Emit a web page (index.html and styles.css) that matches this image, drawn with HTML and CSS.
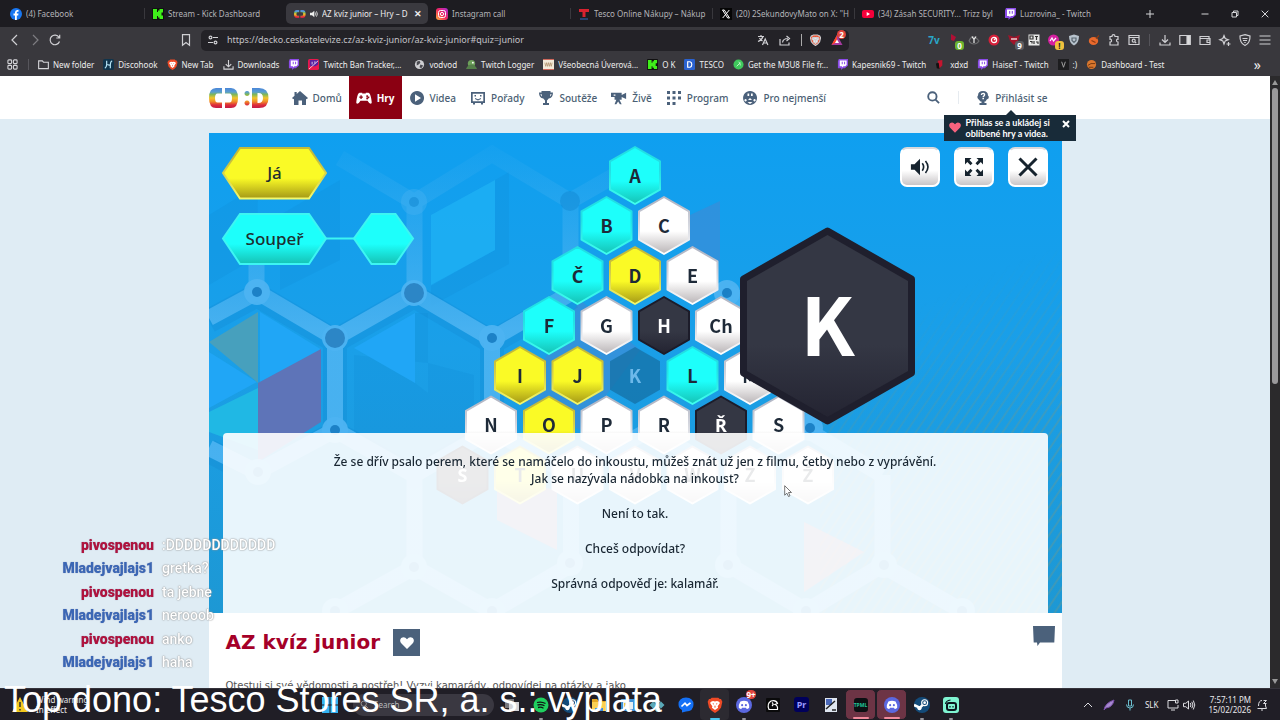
FILE: index.html
```html
<!DOCTYPE html>
<html lang="cs">
<head>
<meta charset="utf-8">
<title>AZ kvíz junior – Hry – Déčko</title>
<link rel="stylesheet" href="styles.css">
</head>
<body>
<svg class="defs" aria-hidden="true">
  <defs>
    <linearGradient id="rainbow" x1="0" y1="0" x2="0" y2="1">
      <stop offset="0" stop-color="#4a86d8"/><stop offset=".2" stop-color="#5a9fd0"/><stop offset=".32" stop-color="#7db65a"/>
      <stop offset=".5" stop-color="#f0c62c"/><stop offset=".68" stop-color="#f08a28"/><stop offset=".85" stop-color="#dd2c3c"/><stop offset="1" stop-color="#c41b46"/>
    </linearGradient>
    <linearGradient id="insta" x1="0" y1="1" x2="1" y2="0">
      <stop offset="0" stop-color="#ffb43a"/><stop offset=".5" stop-color="#f0255f"/><stop offset="1" stop-color="#a62be0"/>
    </linearGradient>
  </defs>
  <symbol id="i-twitch" viewBox="0 0 12 12"><path fill="#8b4be8" d="M2 0h10v7L8.500 10H6.500L4.500 12V10H1V2.500z"/><path fill="#fff" d="M3 1.500h7.500v5L9 8H7L5.500 9.300V8H3z"/><path stroke="#8b4be8" stroke-width="1.100" d="M5.700 3v2.700M8.300 3v2.700"/></symbol>
  <symbol id="i-kick" viewBox="0 0 12 12"><rect width="12" height="12" rx="1" fill="#111"/><path fill="#3ff01a" d="M1 1h4v3h1V2.500h1.500V1H11v3.500H9.500V7.500H11V11H7.500V9.500H6V8H5v3H1z"/></symbol>
  <symbol id="i-brave" viewBox="0 0 12 12"><path fill="#ee4a26" d="M3.500.5h5L9.500 1.500h1L11.500 3.500 10.500 8 8.500 10.300 6 12 3.500 10.300 1.500 8 .5 3.500l1-2h1z"/><path fill="#fff" d="M3 3.500l1.500-.5L6 3.400 7.500 3l1.500.5.7 1L8 7l.3 1L6 9.800 3.700 8 4 7 2.300 4.500z"/><path fill="#ee4a26" d="M4 4.500l1.300.5-.3.800zM8 4.500L6.700 5l.3.800zM6 6l.5 1.500L6 8.300 5.500 7.500z"/></symbol>
  <symbol id="i-discord" viewBox="0 0 12 12"><circle cx="6" cy="6" r="6" fill="#5b68e0"/><path fill="#fff" d="M3.300 3.300Q6 2.300 8.700 3.300 10.200 5.700 9.900 8 9 8.900 8 9L7.500 8.100h-3L4 9Q3 8.900 2.100 8 1.800 5.700 3.300 3.300z"/><circle cx="4.600" cy="6.100" r=".8" fill="#5b68e0"/><circle cx="7.400" cy="6.100" r=".8" fill="#5b68e0"/></symbol>
  <symbol id="i-steam" viewBox="0 0 14 14"><circle cx="7" cy="7" r="7" fill="#134a78"/><path d="M0 7l4.500 2M5 9.500L9 5.500" stroke="#fff" stroke-width="2.200"/><circle cx="9.300" cy="5" r="2.600" fill="#134a78" stroke="#fff"/><circle cx="9.300" cy="5" r="1.200" fill="#fff"/><circle cx="4.800" cy="9.800" r="1.800" fill="#fff"/></symbol>
  <symbol id="i-logo" viewBox="0 0 30 20"><g fill="url(#rainbow)"><path d="M13 0v5.500H8.500Q6 5.500 6 10t2.500 4.500H13V20H7Q0 20 0 10T7 0z"/><path d="M16 0v5.500h4.500Q23 5.500 23 10t-2.500 4.500H16V20h6q7 0 7-10T22 0z"/></g></symbol>
  <symbol id="i-sound" viewBox="0 0 12 12"><path fill="currentColor" d="M0 4h3l3.500-3v10L3 8H0z"/><path fill="none" stroke="currentColor" stroke-width="1.200" d="M8 3.700q1.600 2.300 0 4.600M9.700 2q2.800 4 0 8"/></symbol>
  <symbol id="i-heart" viewBox="0 0 14 12"><path fill="currentColor" d="M7 12L1 6Q-.8 3.200 1.200 1.100 4.500-1 7 2.300 9.500-1 12.800 1.100 14.800 3.200 13 6z"/></symbol>
</svg>

<header class="browser">
  <div class="tabs" role="tablist">
    <button class="tab" role="tab"><svg class="ic" viewBox="0 0 12 12"><circle cx="6" cy="6" r="6" fill="#1877f2"/><path fill="#fff" d="M5 12V7.500H3.500v-2H5V4.500Q5 2 7.200 2h1.300v1.800h-1q-.7 0-.7.800v.9h1.700l-.3 2H6.800V12z"/></svg><span>(4) Facebook</span></button>
    <button class="tab tab-line"  role="tab"><svg class="ic"><use href="#i-kick"/></svg><span>Stream - Kick Dashboard</span></button>
    <button class="tab active" role="tab" aria-selected="true"><svg class="ic"><use href="#i-logo"/></svg><svg class="ic-s"><use href="#i-sound"/></svg><span>AZ kvíz junior – Hry – D</span><b class="tab-x">✕</b></button>
    <button class="tab" role="tab"><svg class="ic" viewBox="0 0 12 12"><rect width="12" height="12" rx="3" fill="url(#insta)"/><rect x="2.500" y="2.500" width="7" height="7" rx="2" fill="none" stroke="#fff"/><circle cx="6" cy="6" r="1.600" fill="none" stroke="#fff"/></svg><span>Instagram call</span></button>
    <button class="tab tab-line" role="tab"><svg class="ic" viewBox="0 0 12 12"><path fill="#d8222f" d="M1 1h10v3H7.500v5h-3V4H1z"/><path stroke="#2f5ea8" stroke-width="1.200" d="M2 11h8"/></svg><span>Tesco Online Nákupy – Nákup</span></button>
    <button class="tab tab-line" role="tab"><svg class="ic" viewBox="0 0 12 12"><rect width="12" height="12" fill="#050505"/><path d="M2.500 2h1.800L9.500 10H7.700zM9.300 2L2.700 10" fill="none" stroke="#fff"/></svg><span>(20) 2SekundovyMato on X: "H</span></button>
    <button class="tab tab-line" role="tab"><svg class="ic" viewBox="0 0 12 12"><rect y="2" width="12" height="8" rx="2" fill="#f4003a"/><path fill="#fff" d="M4.700 4v4L8 6z"/></svg><span>(34) Zásah SECURITY... Trizz byl</span></button>
    <button class="tab" role="tab"><svg class="ic"><use href="#i-twitch"/></svg><span>Luzrovina_ - Twitch</span></button>
    <button class="new-tab" aria-label="New tab"><svg viewBox="0 0 8 8"><path d="M4 0v8M0 4h8"/></svg></button>
    <div class="win">
      <button aria-label="Minimize"><svg viewBox="0 0 8 8"><path d="M.5 4h7"/></svg></button>
      <button aria-label="Restore"><svg viewBox="0 0 8 8"><path d="M1 2.500h4.500V7H1zM2.500 2.500V1H7v4.500H5.500"/></svg></button>
      <button aria-label="Close"><svg viewBox="0 0 8 8"><path d="M.7.700l6.600 6.600M7.300.700L.7 7.300"/></svg></button>
    </div>
  </div>
  <div class="toolbar">
    <div class="nav-btns">
      <button aria-label="Back"><svg viewBox="0 0 12 12"><path d="M8 1L3 6l5 5"/></svg></button>
      <button aria-label="Forward" class="dim"><svg viewBox="0 0 12 12"><path d="M4 1l5 5-5 5"/></svg></button>
      <button aria-label="Reload"><svg viewBox="0 0 12 12"><path d="M10.500 7.500A4.800 4.800 0 1 1 10 3.300M10.700.700v3.300H7.300"/></svg></button>
    </div>
    <button class="save" aria-label="Bookmark this page"><svg viewBox="0 0 12 12"><path d="M2.500.7h7v10.600L6 8.500l-3.500 2.800z"/></svg></button>
    <div class="url">
      <svg viewBox="0 0 12 12"><circle cx="3.500" cy="3.500" r="1.400"/><circle cx="8.500" cy="8.500" r="1.400"/><path d="M6 3.500h5M1 8.500h5"/></svg>
      <input aria-label="Address" value="https://decko.ceskatelevize.cz/az-kviz-junior/az-kviz-junior#quiz=junior">
      <svg viewBox="0 0 12 12"><path d="M1 2.500h6M4 1v1.500M6 2.500Q5 6 1 7.500M2.500 4q1 2 3 3M5.500 11l2.700-6 2.700 6M6.500 9h3.500"/></svg>
      <svg viewBox="0 0 12 12"><path d="M1 5v6h9V8.500M3.500 8.500Q4 4.500 9 4.500M7.500 2l3 2.500-3 2.500"/></svg>
      <svg class="brv"><use href="#i-brave"/></svg>
      <span class="rewards"><svg viewBox="0 0 12 12"><path d="M6 1l5.500 10H.5z" fill="#a53aa0" stroke="none"/><path d="M6 1L.5 11 6 8z" fill="#ff4724" stroke="none"/><path d="M6 5.500L8 9H4z" fill="#fff" stroke="none"/></svg><i class="badge red">2</i></span>
    </div>
    <div class="exts">
      <span class="seven">7v</span>
      <span><svg viewBox="0 0 12 12"><path fill="#b01035" stroke="none" d="M3 0l5 3-2 4-3-1z"/></svg><i class="badge green">0</i></span>
      <span><svg viewBox="0 0 12 12"><path d="M1 7q2-5 5-4t5 4q-2 3-5 3T1 7" stroke="#6d6d70"/><path d="M4 2.500l2 3 2-3M6 5.500V9" stroke="#eee"/></svg></span>
      <span><svg viewBox="0 0 12 12"><circle cx="6" cy="6" r="5.500" fill="#d5203a" stroke="none"/><circle cx="6" cy="6" r="2.600" stroke="#fff"/><path d="M6 6l2-2" stroke="#fff"/></svg></span>
      <span><svg viewBox="0 0 12 12"><path fill="#a0142a" stroke="none" d="M0 1l6 2 6-2-2 6-4 4-4-4z"/><path d="M3 5h6" stroke="#fff"/></svg><i class="badge grey">9</i></span>
      <span><svg viewBox="0 0 12 12"><path fill="#e8e8e8" stroke="none" d="M.5.500h11v11H.5z"/><path stroke="#333" d="M2 2h3v3H2zM7 2.500h3M8.500 2v4M2 7.500h2v2M6 7v3M8 8h2v2"/></svg></span>
      <span><svg viewBox="0 0 12 12"><circle cx="5.500" cy="6" r="5.500" fill="#d51fa0" stroke="none"/><path d="M2 7l2-3 1.500 3L8 4" stroke="#fff"/></svg><i class="badge amber">!</i></span>
      <span><svg viewBox="0 0 12 12"><path fill="#b7c2cc" stroke="none" d="M6 .5l5 1.500q0 7-5 9.500Q1 9 1 2z"/><path stroke="#5a6670" d="M4 4h4v2.500L6 8.500 4 6.500z"/></svg></span>
      <span><svg viewBox="0 0 12 12"><ellipse cx="5.500" cy="7" rx="4.700" ry="4" fill="#e8692c" stroke="none"/><path d="M8 4.500l3-3M3.500 6.500l4 2" stroke="#8c3a12"/></svg></span>
      <span><svg viewBox="0 0 12 12"><path d="M2 2.500h2Q4 .5 5.500.7 7 .7 7 2.500h3v2.700Q8.500 5 8.500 6.500T10 8v3H2V8q1.700 0 1.500-1.500T2 5.200z"/></svg></span>
      <span><svg viewBox="0 0 12 12"><path d="M1 1.500h10v9H1zM1 3.500h10"/><circle cx="5.700" cy="6.700" r="1.500"/><path d="M7 8l1.200 1.200"/></svg></span>
    </div>
    <div class="exts right">
      <span><svg viewBox="0 0 12 12"><path d="M6 1v7M3 5.500l3 3 3-3M1 8.500V11h10V8.500"/></svg></span>
      <span><svg viewBox="0 0 12 12"><path d="M.8 1.500h10.400v9H.8z"/><path fill="#ddd" d="M8 1.500h3v9H8z"/></svg></span>
      <span><svg viewBox="0 0 12 12"><path d="M1 2.500h9v2M1 2v8.500h10v-6H1M11 6H8v2.500h3"/></svg></span>
      <span><svg viewBox="0 0 12 12"><path d="M5 1.500l1.200 3 3 1.200-3 1.200L5 10 3.800 6.900l-3-1.200 3-1.200zM9.500 8v4M7.500 10h4"/></svg></span>
      <span><svg viewBox="0 0 12 12"><path d="M6 .7l5 1.300q.3 7-5 9.500Q.7 9 1 2z"/><path d="M3.500 4.500h5M4 6.500h4M5.300 8.500h1.400"/></svg></span>
      <span><svg viewBox="0 0 12 12"><path d="M.5 2h11M.5 6h11M.5 10h11"/></svg></span>
    </div>
  </div>
  <nav class="marks" aria-label="Bookmarks">
    <a href="#" class="apps"><svg viewBox="0 0 12 12" class="ln"><rect x="1" y="1" width="4" height="4" rx="1"/><rect x="7" y="1" width="4" height="4" rx="1"/><rect x="1" y="7" width="4" height="4" rx="1"/><rect x="7" y="7" width="4" height="4" rx="1"/></svg></a>
    <a href="#"><svg viewBox="0 0 12 12" class="ln"><path d="M.7 2h4l1.300 1.500h5.300v7H.7z"/></svg>New folder</a>
    <a href="#"><svg viewBox="0 0 12 12"><rect width="12" height="12" rx="2" fill="#10344c"/><path d="M4 2v4q0 3-2 4M8 10V6q0-3 2-4M4 6l4 1" stroke="#b5e3f5" fill="none" stroke-width="1.300"/></svg>Discohook</a>
    <a href="#"><svg><use href="#i-brave"/></svg>New Tab</a>
    <a href="#"><svg viewBox="0 0 12 12" class="ln"><path d="M6 1v7M3 5.500l3 3 3-3M1 8v3h10V8"/></svg>Downloads</a>
    <a href="#" aria-label="Twitch"><svg><use href="#i-twitch"/></svg></a>
    <a href="#"><svg viewBox="0 0 12 12"><rect width="12" height="12" rx="2" fill="#e9184c"/><path fill="#5b1fa0" d="M2 1h9v5L8 8H2z"/><path d="M1 11L11 2M4.500 3v3M7.500 2.500V5" stroke="#fff" stroke-width=".8"/></svg>Twitch Ban Tracker,...</a>
    <a href="#" class="gap"><svg viewBox="0 0 12 12"><circle cx="6" cy="6" r="5" fill="#cfcfd2"/><path fill="#4a4a50" d="M3 3l3-1 1 2-2 2-2 1zM7 6l3 1-2 3-2-1z"/></svg>vodvod</a>
    <a href="#"><svg viewBox="0 0 12 12"><circle cx="6" cy="5" r="4" fill="#6da05a"/><path fill="#55804a" d="M0 11q2-5 6-5t6 5z"/><circle cx="7.500" cy="4" r="1" fill="#fff"/></svg>Twitch Logger</a>
    <a href="#"><svg viewBox="0 0 12 12"><rect width="12" height="12" fill="#f3ead9"/><path d="M0 .5h12M0 11.500h12" stroke="#c9564a"/><path d="M2 4l1 4 1-4 1 4 1-4 1 4 1-4 1 4 1-4" stroke="#a5845c" fill="none" stroke-width=".7"/></svg>Všeobecná Úverová...</a>
    <a href="#"><svg><use href="#i-kick"/></svg>O K</a>
    <a href="#"><svg viewBox="0 0 12 12"><rect width="12" height="12" rx="1.500" fill="#2a62d0"/><path d="M4 3h2.500Q8.500 3.500 8.500 6T6.500 9H4z" stroke="#fff" stroke-width="1.300" fill="none"/></svg>TESCO</a>
    <a href="#"><svg viewBox="0 0 12 12"><circle cx="6" cy="6" r="5.500" fill="#3fc95c"/><path d="M4 8l4-4M6 3q2 1 2 4" stroke="#c8f5d0" fill="none"/></svg>Get the M3U8 File fr...</a>
    <a href="#"><svg><use href="#i-twitch"/></svg>Kapesnik69 - Twitch</a>
    <a href="#"><svg viewBox="0 0 12 12"><path fill="#c4152f" d="M3 2l5-1v6l-4 4z"/><path fill="#111" d="M1 5l3-1 1 7-3-1z"/></svg>xdxd</a>
    <a href="#"><svg><use href="#i-twitch"/></svg>HaiseT - Twitch</a>
    <a href="#"><svg viewBox="0 0 12 12"><rect width="12" height="12" fill="#1d1d1f"/><path d="M4 3l2 6 2-6" stroke="#aaa" fill="none"/></svg>:)</a>
    <a href="#"><svg viewBox="0 0 12 12"><circle cx="6" cy="6" r="5" fill="#d9772e"/><path d="M2 7q3-3 8-2M3 9h5" stroke="#6d330d" fill="none"/></svg>Dashboard - Test</a>
    <button class="more" aria-label="More bookmarks">»</button>
  </nav>
</header>

<div class="view">
  <div class="page">
    <header class="site">
      <div class="wrap site-row">
        <a href="#" class="logo" aria-label="ČT :D"><svg viewBox="0 0 60 20"><use href="#i-logo" width="30" height="20"/><g fill="url(#rainbow)"><path fill-rule="evenodd" d="M38 3a2.500 2.500 0 1 0 .1 0zM38 12.500a2.500 2.500 0 1 0 .1 0zM43 0h7q9.500 0 9.500 10T50 20h-7zM48.500 5v10q5.500 .5 5.500-5T48.500 5z"/></g></svg></a>
        <nav class="menu" aria-label="Hlavní">
          <a href="#"><svg viewBox="0 0 16 16"><path d="M8 1l8 7-1.300 1.300L14 8.700V15h-4v-4.500H6.500V15H2V8.700l-.7.600L0 8l2.500-2.200V2h2.200v1.900z"/></svg>Domů</a>
          <a href="#" class="on"><svg viewBox="0 0 18 14"><path fill-rule="evenodd" d="M4 1h3v1h4V1h3q2 .5 3 6t.5 6q-2 1.500-4.500-3H5Q2.500 14.500.5 13 0 12.500 1 7t3-6zM5 4v1.300H3.700v1.400H5V8h1.400V6.700h1.300V5.300H6.400V4zm7.500 0a1 1 0 1 0 .1 0zm0 2.500a1 1 0 1 0 .1 0zM14 5.200a1 1 0 1 0 .1 0z"/></svg>Hry</a>
          <a href="#"><svg viewBox="0 0 16 16"><path fill-rule="evenodd" d="M8 1a7 7 0 1 0 .1 0zM6 4.300v7.400L12 8z"/></svg>Videa</a>
          <a href="#"><svg viewBox="0 0 16 16"><path fill-rule="evenodd" d="M1 2h14v11h-2v1.500h-2V13H5v1.500H3V13H1zM2.700 3.700v7.600h10.600V3.700z"/><path d="M4.500 5H6v1.500H4.500zM10 5h1.500v1.500H10zM5 8l3 1.300L11 8v1l-3 1.500L5 9z"/></svg>Pořady</a>
          <a href="#"><svg viewBox="0 0 16 16"><path fill-rule="evenodd" d="M3.500 1h9v1.500H15Q15 8 10.700 8.500L9 10.500V13h2v2H5v-2h2v-2.500L5.300 8.500Q1 8 1 2.500h2.500zM2.500 4q.3 2 1.500 2.500L3.500 4zm10 0L12 6.500q1.200-.5 1.500-2.500z"/></svg>Soutěže</a>
          <a href="#"><svg viewBox="0 0 18 16"><path d="M0 2h12v2.500L17 2v7l-5-2v3H9.500l2.500 5h-2L8 12l-2 3H4l2-5H4V7H0zM3 4v1.500h2V4z" fill-rule="evenodd"/></svg>Živě</a>
          <a href="#"><svg viewBox="0 0 16 16"><path d="M1 1h3v3H1zM6.500 1h3v3h-3zM12 1h3v3h-3zM1 6.500h3v3H1zM6.500 6.500h3v3h-3zM12 6.500h3v3h-3zM1 12h3v3H1zM6.500 12h3v3h-3z"/></svg>Program</a>
          <a href="#"><svg viewBox="0 0 16 16"><path fill-rule="evenodd" d="M8 1a7 7 0 1 0 .1 0zM5.500 3.500h1.700V6H5.500zm3.500 0h1.700V6H9zM3.500 9a1.200 1.200 0 1 0 .1 0zm9 0a1.200 1.200 0 1 0 .1 0zM8 8l2 2H6zM5.500 12h5L8 14z"/></svg>Pro nejmenší</a>
        </nav>
        <button class="find" aria-label="Hledat"><svg viewBox="0 0 14 14"><circle cx="5.800" cy="5.800" r="4.500"/><path d="M9.200 9.200L13 13"/></svg></button>
        <div class="login">
          <a href="#"><svg viewBox="0 0 16 16"><path fill-rule="evenodd" d="M8 1q5 0 5 4.500 1.500 1 .5 3-2 .5-3 3h-1V13h2v2h-7v-2h2v-1.500h-1Q3.500 9 2.500 8 2 6 3 5.500 3 1 8 1zM5.700 5h1.400q.2-1.200 1.500-.8.800.8-.2 1.400-.9.500-.9 1.700H9q0-1 1-1.600Q11 3 8.200 2.700 5.900 2.800 5.700 5zM7.400 8v1.300H9V8z"/></svg>Přihlásit se</a>
          <div class="tip" role="status">
            <svg class="tip-heart"><use href="#i-heart"/></svg>
            <p>Přihlas se a ukládej si<br>oblíbené hry a videa.</p>
            <button aria-label="Zavřít"><svg viewBox="0 0 8 8"><path d="M1 1l6 6M7 1L1 7"/></svg></button>
          </div>
        </div>
      </div>
    </header>

    <main class="wrap">
      <section class="game" aria-label="Hra">
        <svg class="board" viewBox="209 133 853 480">
          <defs>
            <linearGradient id="sky" x1="0" y1="0" x2="0" y2="1"><stop offset="0" stop-color="#0f9ff0"/><stop offset=".45" stop-color="#1a9fe8"/><stop offset="1" stop-color="#1d98d4"/></linearGradient>
            <linearGradient id="g-c" x1="0" y1="0" x2="0" y2="1"><stop offset=".6" stop-color="#1dfffb"/><stop offset="1" stop-color="#15c2b4"/></linearGradient>
            <linearGradient id="g-y" x1="0" y1="0" x2="0" y2="1"><stop offset=".6" stop-color="#fafa26"/><stop offset="1" stop-color="#a49816"/></linearGradient>
            <linearGradient id="g-w" x1="0" y1="0" x2="0" y2="1"><stop offset=".6" stop-color="#fff"/><stop offset="1" stop-color="#b9b4b6"/></linearGradient>
            <linearGradient id="g-d" x1="0" y1="0" x2="0" y2="1"><stop offset=".6" stop-color="#343744"/><stop offset="1" stop-color="#232331"/></linearGradient>
            <linearGradient id="s-c" x1="0" y1="0" x2="0" y2="1"><stop offset=".4" stop-color="#22dfe4"/><stop offset="1" stop-color="#3fffee"/></linearGradient>
            <linearGradient id="s-y" x1="0" y1="0" x2="0" y2="1"><stop offset=".2" stop-color="#c4bb3a"/><stop offset="1" stop-color="#f4f86a"/></linearGradient>
            <linearGradient id="s-w" x1="0" y1="0" x2="0" y2="1"><stop offset=".1" stop-color="#b4b8c6"/><stop offset="1" stop-color="#fff"/></linearGradient>
            <linearGradient id="fade" x1="0" y1="0" x2=".3" y2="1"><stop offset=".25" stop-color="#000"/><stop offset=".7" stop-color="#fff"/></linearGradient>
            <linearGradient id="lat" gradientUnits="userSpaceOnUse" x1="0" y1="150" x2="0" y2="330"><stop offset="0" stop-color="#3eaef0" stop-opacity=".12"/><stop offset="1" stop-color="#4db4f2" stop-opacity=".9"/></linearGradient>
            <pattern id="stripes" width="8" height="8" patternUnits="userSpaceOnUse" patternTransform="rotate(34)"><path d="M1 0v8" stroke="#6a9a90" stroke-width="1.500"/></pattern>
            <mask id="corner"><path d="M820 250h242v363H820z" fill="url(#fade)"/></mask>
            <path id="hex" d="M0-28.500L25-14.200V14.200L0 28.500-25 14.200V-14.200z" stroke-width="2" stroke-linejoin="round"/>
            <g id="node"><circle r="13" fill="#4db4f2"/><circle r="5" fill="#1b7fc4"/></g>
          </defs>
          <path fill="url(#sky)" d="M209 133h853v480H209z"/>
          <path fill="url(#stripes)" mask="url(#corner)" opacity=".55" d="M820 250h242v363H820z"/>
          <g fill="#0d87d2" opacity=".2"><path d="M340 180v80l-60 30v-75zM495 180l14-8v92l-78 42v-20l64-36zM415 313h13v80l-13-10zM354 355v90l60 30 60-30v-70l-46-12zM258 185l-49 30v70l48-28z"/></g>
          <path fill="#1eb0f4" opacity=".8" d="M431 215l64-35v70l-64 35z"/>
          <path fill="#20a6f6" d="M354 348l61-35v70zM260 312l62 38-62 32zM209 352l48 30-48 26z"/>
          <path fill="#47a0bd" d="M209 342l49-30v71z"/>
          <path fill="#20b8e4" d="M209 412l49-24v62l-49-18z"/>
          <path fill="#5e74b8" d="M258 383l63-34v73l-63 40z"/>
          <path fill="#4a86cf" opacity=".5" d="M690 215l30-14v60l-30 10zM520 400l60-100 60 50-60 80zM780 390h40v30z"/>
          <path fill="#e07080" opacity=".55" d="M497 480l60 10v60l-60-30zM804 522l60 30-60 40z"/>
          <g fill="none" stroke="#0e7fc8" stroke-width="24" opacity=".2"><path d="M209 321l48-26 78 46 79-45 78 46 80-45M335 341v92l-78 43-48-25M492 341v92l-78 43-79-43"/></g>
          <g fill="none" stroke="url(#lat)" stroke-width="16"><path d="M209 318l48-26 78 46 79-45 78 46 79-46M256.500 220v72M335 338v92l-78 42-48-24M492 338v92l-78 45-79-45M414.500 202v91M340 158l74 44 78-48 78 47M570.500 201v92M414.500 475v92l-79 44M414 567l78 44 79-46V475l-79-45M728.500 475v90l78 46 76-46V475M882 565l80 46M570 475l79-45 79 45 79-45 75 45M728 293l81 45v92M570 201l70-40"/></g>
          <g opacity=".95"><use href="#node" x="257" y="292"/><use href="#node" x="335" y="338"/><use href="#node" x="335" y="430"/><use href="#node" x="492" y="338"/><use href="#node" x="414" y="293"/><use href="#node" x="258" y="472"/><use href="#node" x="414" y="567"/><use href="#node" x="570" y="563"/><use href="#node" x="728" y="565"/><use href="#node" x="884" y="565"/><use href="#node" x="810" y="428"/><use href="#node" x="727" y="293"/><use href="#node" x="335" y="611"/><use href="#node" x="492" y="611"/><use href="#node" x="806" y="611"/><use href="#node" x="962" y="611"/></g>
          <g fill="#2c86c6"><circle cx="335" cy="338" r="10"/><circle cx="414" cy="293" r="10"/></g>
          <g opacity=".35"><use href="#node" x="414" y="202"/><circle cx="570" cy="201" r="10" fill="#0c7fc9"/></g>

          <g class="tile c">
            <g transform="translate(635 175.500)"><use href="#hex"/><text y="7">A</text></g>
            <g transform="translate(606.500 225.500)"><use href="#hex"/><text y="7">B</text></g>
            <g transform="translate(577.500 275.500)"><use href="#hex"/><text class="car" y="7">Č</text></g>
            <g transform="translate(549 325.500)"><use href="#hex"/><text y="7">F</text></g>
            <g transform="translate(692.500 375.500)"><use href="#hex"/><text y="7">L</text></g>
          </g>
          <g class="tile y">
            <g transform="translate(635 275.500)"><use href="#hex"/><text y="7">D</text></g>
            <g transform="translate(520 375.500)"><use href="#hex"/><text y="7">I</text></g>
            <g transform="translate(577.500 375.500)"><use href="#hex"/><text y="7">J</text></g>
            <g transform="translate(549 425)"><use href="#hex"/><text y="7">O</text></g>
            <g transform="translate(520 475)"><use href="#hex"/><text y="7">T</text></g>
          </g>
          <g class="tile w">
            <g transform="translate(664 225.500)"><use href="#hex"/><text y="7">C</text></g>
            <g transform="translate(692.500 275.500)"><use href="#hex"/><text y="7">E</text></g>
            <g transform="translate(606.500 325.500)"><use href="#hex"/><text y="7">G</text></g>
            <g transform="translate(721 325.500)"><use href="#hex"/><text y="7">Ch</text></g>
            <g transform="translate(750 375.500)"><use href="#hex"/><text y="7">M</text></g>
            <g transform="translate(491 425)"><use href="#hex"/><text y="7">N</text></g>
            <g transform="translate(606.500 425)"><use href="#hex"/><text y="7">P</text></g>
            <g transform="translate(664 425)"><use href="#hex"/><text y="7">R</text></g>
            <g transform="translate(778.500 425)"><use href="#hex"/><text y="7">S</text></g>
            <g transform="translate(577.500 475)"><use href="#hex"/><text y="7">U</text></g>
            <g transform="translate(635 475)"><use href="#hex"/><text y="7">V</text></g>
            <g transform="translate(692.500 475)"><use href="#hex"/><text y="7">W</text></g>
            <g transform="translate(750 475)"><use href="#hex"/><text y="7">Z</text></g>
            <g transform="translate(808 475)"><use href="#hex"/><text class="car" y="7">Ž</text></g>
          </g>
          <g class="tile d">
            <g transform="translate(664 325.500)"><use href="#hex"/><text y="7">H</text></g>
            <g transform="translate(721 425)"><use href="#hex"/><text class="car" y="7">Ř</text></g>
            <g transform="translate(462.500 475)"><use href="#hex"/><text class="car" y="7">Š</text></g>
          </g>
          <g class="tile gone" transform="translate(635 375.500)"><use href="#hex"/><text y="7">K</text></g>
          <g class="tile big" transform="translate(827.500 326)"><path d="M0-95L84-47V47L0 95-84 47V-47z"/><text y="30">K</text></g>

          <g class="badge-y"><path d="M240 148h69l17 25-17 25.500h-69L223 173z"/><text x="274.500" y="179">Já</text></g>
          <g class="badge-c"><path d="M326 238.500h28" stroke-width="3"/><path d="M240 214h69l17 24.500-17 25.500h-69l-17-25.500z"/><path d="M371.500 214h24l17.500 24.500L395.500 264h-24L354 238.500z"/><text x="274.500" y="245">Soupeř</text></g>
        </svg>
        <div class="controls">
          <button aria-label="Zvuk"><svg viewBox="0 0 22 20"><path d="M1 7h4l6-6v18l-6-6H1z"/><path class="ln" d="M13.500 6q3 4 0 8M17 3.500q5.500 6.500 0 13"/></svg></button>
          <button aria-label="Celá obrazovka"><svg viewBox="0 0 20 20"><path d="M1 1h6.500L5.400 3.100 8.500 6.200 6.500 8.200 3.300 5.100 1 7.500zM19 1v6.500l-2.200-2.400-3.300 3.100-2-2 3.100-3.100L12.500 1zM1 19v-6.500l2.300 2.400 3.200-3.100 2 2-3.100 3.100L7.500 19zM19 19h-6.500l2.100-2.100-3.100-3.100 2-2 3.300 3.100L19 12.500z"/></svg></button>
          <button aria-label="Zavřít hru"><svg viewBox="0 0 20 20"><path class="x" d="M1.500 1.500l17 17M18.500 1.500l-17 17"/></svg></button>
        </div>
        <div class="question">
          <p>Že se dřív psalo perem, které se namáčelo do inkoustu, můžeš znát už jen z filmu, četby nebo z vyprávění.<br>Jak se nazývala nádobka na inkoust?</p>
          <p>Není to tak.</p>
          <p>Chceš odpovídat?</p>
          <p>Správná odpověď je: kalamář.</p>
        </div>
      </section>
      <section class="about">
        <div class="about-head">
          <h1>AZ kvíz junior</h1>
          <button class="fav" aria-label="Přidat k oblíbeným"><svg><use href="#i-heart"/></svg></button>
          <button class="talk" aria-label="Komentáře"><svg viewBox="0 0 22 20"><path d="M0 0h22l-.7 16.500H7L4.500 20 4 16.500H.7z"/></svg></button>
        </div>
        <p>Otestuj si své vědomosti a postřeh! Vyzvi kamarády, odpovídej na otázky a jako</p>
      </section>
    </main>
  </div>
  <div class="scroll" aria-hidden="true"><i class="up"></i><i class="thumb"></i><i class="down"></i></div>
</div>

<footer class="taskbar">
  <div class="weather"><svg viewBox="0 0 16 16"><path fill="#f2c81e" d="M8 0l8 15H0z"/><path d="M8 5v5M8 12v1.500" stroke="#333" stroke-width="1.500"/></svg><p>Wind warning<br>In effect</p></div>
  <div class="dock">
    <button aria-label="Start"><svg class="start" viewBox="0 0 16 16"><path fill="#35b4f2" d="M0 0h7.500v7.500H0zM8.500 0H16v7.500H8.500zM0 8.500h7.500V16H0zM8.500 8.500H16V16H8.500z"/></svg></button>
    <button class="search"><svg viewBox="0 0 12 12"><circle cx="5" cy="5" r="3.500"/><path d="M7.500 7.500L11 11"/></svg>Search</button>
    <div class="apps-row">
      <button aria-label="Task view"><svg viewBox="0 0 16 16"><path fill="#77777c" d="M1 2h9v9H1z"/><path fill="#d4d4d8" d="M5 5h10v9H5z"/></svg></button>
      <button aria-label="Spotify" class="run"><svg viewBox="0 0 16 16"><circle cx="8" cy="8" r="7.500" fill="#1fd05f"/><path d="M4 5.500q4.500-1.300 8.500 1M4.500 8q3.800-1 7 .8M5 10.500q3-.8 5.500.7" stroke="#111" stroke-width="1.300" fill="none"/></svg></button>
      <button aria-label="Steam client"><svg><use href="#i-steam"/></svg></button>
      <button aria-label="File Explorer"><svg viewBox="0 0 16 16"><path fill="#e6a821" d="M1 2h5l2 2h7v4H1z"/><path fill="#fbd052" d="M1 5h14v9H1z"/><path fill="#3b8ee0" d="M4 11h8v3H4z"/></svg></button>
      <button aria-label="Photos"><svg viewBox="0 0 16 16"><rect x="1" y="2" width="14" height="12" rx="1" fill="#3e92d8"/><path fill="#e6eef2" d="M3 5h10v7H3z"/><path fill="#edca3f" d="M4 6h4v4H4z"/></svg></button>
      <button aria-label="Diamond"><svg viewBox="0 0 16 16"><path fill="#8fd3dd" d="M8 1l3.500 3.500L8 8 4.500 4.500zM8 8l3.500 3.500L8 15l-3.500-3.500z"/><path fill="#5aa9b8" d="M4 4.500L7.500 8 4 11.500.5 8zM12 4.500L15.500 8 12 11.500 8.500 8z"/></svg></button>
      <button aria-label="Messenger"><svg viewBox="0 0 16 16"><path fill="#1470f5" d="M8 .5q7.500.3 7.500 7T8 14.500L4 15.500V13Q.5 11 .5 7.500.5.800 8 .5z"/><path d="M3.500 9.500L7 6.200 9 8.500l3.500-2.700" stroke="#fff" stroke-width="1.700" fill="none"/></svg></button>
      <button aria-label="Brave" class="front"><svg><use href="#i-brave"/></svg></button>
      <button aria-label="Discord" class="run"><svg><use href="#i-discord"/></svg><i class="badge red">9+</i></button>
      <button aria-label="OBS"><svg viewBox="0 0 16 16"><rect x="1" y="1" width="14" height="14" rx="1" fill="#0a0a0b"/><path d="M4 12.500Q1.500 7 6 4q5-1.500 6.500 2.500l-2.500 1q3 1 2.500 5zM7 5.500Q9 7 7 9" fill="none" stroke="#fff" stroke-width="1.200"/></svg></button>
      <button aria-label="Premiere"><span class="pr">Pr</span></button>
      <button aria-label="Paint"><svg viewBox="0 0 16 16"><path fill="#dfe6f0" d="M2 1h12v14H2z"/><path fill="#4a68b8" d="M3 2h6v6H3z"/><path d="M3 12L12 4M9 13h4" stroke="#222" stroke-width="1.500"/></svg></button>
      <button aria-label="Recorder" class="hot"><span class="rec">TPML</span></button>
      <button aria-label="Discord call" class="hot"><svg><use href="#i-discord"/></svg></button>
      <button aria-label="Steam" class="run"><svg><use href="#i-steam"/></svg></button>
      <button aria-label="Streamlabs" class="run"><svg viewBox="0 0 16 16"><rect width="16" height="16" rx="3" fill="#80f5d2"/><rect x="4" y="6" width="9" height="7" rx="2" fill="none" stroke="#09161d" stroke-width="2"/><path d="M7 9v1.500M10 9v1.500M2.500 7q.5-3.500 5-4" stroke="#09161d" stroke-width="1.200" fill="none"/></svg></button>
    </div>
  </div>
  <div class="tray">
    <svg viewBox="0 0 12 12"><path d="M2 8l4-4 4 4"/></svg>
    <svg viewBox="0 0 12 12"><path fill="#a78ad0" stroke="#7a4fa8" d="M1 11Q2 4 11 1 10 8 3 9z"/></svg>
    <svg viewBox="0 0 12 12" class="mic"><path d="M4.500 1h3v6h-3zM2.500 5.500Q2.500 9 6 9t3.500-3.500M6 9v2.500"/></svg>
    <span class="lang">SLK</span>
    <svg viewBox="0 0 12 12"><path d="M8 1.500H1v7.500h10V6M4 11h4M8.500 1H11v3H8.500z"/></svg>
    <svg class="vol" viewBox="0 0 12 12"><path d="M.5 4.300h2.300L5.500 2v8L2.800 7.700H.5zM7.300 4q1.300 2 0 4M8.800 2.800q2.300 3.200 0 6.400M10.300 1.500q3 4.500 0 9"/></svg>
    <time>7:57:11 PM<br>15/02/2026</time>
    <svg viewBox="0 0 12 12"><path d="M1.500 9.500h9L9.500 7V5M2.500 7Q2.500 1.500 6 1.500M5 11h2M7.500 1.500h3l-3 3h3"/></svg>
  </div>
</footer>

<div class="chat">
  <b class="r">pivospenou</b><span>:DDDDDDDDDDDD</span>
  <b>Mladejvajlajs1</b><span>gretka?</span>
  <b class="r">pivospenou</b><span>ta jebne</span>
  <b>Mladejvajlajs1</b><span>nerooob</span>
  <b class="r">pivospenou</b><span>anko</span>
  <b>Mladejvajlajs1</b><span>haha</span>
</div>
<p class="dono">Top dono: Tesco Stores SR, a. s.: vyplata</p>
<svg class="cursor" viewBox="0 0 8 12"><path d="M.7.700v9.500l2.200-2 1.600 3.300 1.500-.7L4.500 7.500h3z"/></svg>
</body>
</html>
```
FILE: styles.css
```css
* { box-sizing: border-box; }
body {
  margin: 0;
  height: 100vh;
  display: flex;
  flex-direction: column;
  overflow: hidden;
  position: relative;
  background: #1f1e24;
  font: 8px/12px "Noto Sans", sans-serif;
  color: #e9e9ec;
}
button { background: none; border: 0; padding: 0; margin: 0; font: inherit; color: inherit; }
a { color: inherit; text-decoration: none; }
p, h1 { margin: 0; }
svg { display: block; flex: none; overflow: visible; }
.defs { position: absolute; width: 0; height: 0; }

/* browser chrome */
.browser { background: #39383d; }
.tabs { display: flex; align-items: center; height: 27px; background: #1d1c21; }
.tab {
  flex: 0 1 142px;
  min-width: 0;
  height: 21px;
  display: flex;
  align-items: center;
  gap: 4px;
  padding: 0 2px 0 8px;
  border-radius: 5px;
  color: #b4b4b8;
  text-align: left;
  position: relative;
}
.tab span { flex: 1; min-width: 0; overflow: hidden; white-space: nowrap; }
.tab:first-child { margin-left: 2px; }
.tab-line::before { content: ""; position: absolute; left: 0; top: 5px; height: 11px; border-left: 1px solid #39383d; }
.active { background: #3a393f; color: #eee; padding-right: 6px; }
.tab-x { font-size: 9px; }
.ic { width: 12px; height: 12px; }
.ic-s { width: 8px; height: 8px; }
.new-tab { width: 24px; display: grid; place-items: center; }
.new-tab svg, .win svg { width: 8px; height: 8px; fill: none; stroke: #d5d5d8; }
.win { margin-left: auto; display: flex; }
.win button { width: 30px; display: grid; place-items: center; }

.toolbar { display: flex; align-items: center; height: 26px; padding: 0 9px; }
.toolbar svg { width: 12px; height: 12px; fill: none; stroke: #d0d0d4; stroke-width: 1.2; }
.nav-btns { display: flex; gap: 8px; width: 171px; }
.dim { opacity: .45; }
.url {
  flex: 0 1 648px;
  display: flex;
  align-items: center;
  gap: 10px;
  height: 21px;
  margin-left: 9px;
  padding: 0 6px;
  border-radius: 5px;
  background: #232227;
}
.url input { flex: 1; min-width: 0; border: 0; padding: 0; background: none; font: 9px/12px "Noto Sans", sans-serif; color: #c3c3c8; }
.url > svg:first-child { margin-right: -2px; }
.url .brv { border-left: 1px solid #aaa; width: 20px; padding-left: 8px; }
.url .brv use { width: 12px; }
.rewards { position: relative; }
.exts { display: flex; margin-left: auto; }
.exts span { width: 20px; display: grid; place-items: center; position: relative; }
.right { margin-left: 5px; padding-left: 5px; border-left: 1px solid #55545a; margin-right: -4px; }
.seven { color: #2aa7c9; font-weight: bold; font-size: 10px; }
.badge {
  position: absolute;
  right: -3px;
  bottom: -4px;
  min-width: 9px;
  height: 9px;
  border-radius: 3px;
  font: 700 8px/9px "Noto Sans", sans-serif;
  text-align: center;
  color: #fff;
}
.exts .badge { right: 0; }
.red { background: #e0443c; border-radius: 5px; top: -4px; }
.green { background: #6cb32e; }
.grey { background: #5d5d62; }
.amber { background: #efc03e; color: #222; }

.marks { display: flex; align-items: center; gap: 9px; height: 23px; padding: 0 19px 0 7px; white-space: nowrap; color: #eee; }
.marks a { display: flex; align-items: center; gap: 4px; }
.marks svg { width: 11px; height: 11px; }
.marks .ln { fill: none; stroke: #d4d4d8; stroke-width: 1.2; }
.marks .apps { padding-right: 10px; border-right: 1px solid #57565c; }
.marks .gap { margin-left: 4px; }
.more { margin-left: auto; font-size: 14px; }

/* page */
.view { flex: 1; min-height: 0; display: flex; }
.page { flex: 1; overflow: hidden; background: #dfecf4; }
.wrap { width: 100%; max-width: 853px; margin: 0 auto; }
.site { background: #fff; height: 43px; }
.site-row { display: flex; height: 100%; align-items: center; color: #4b5f74; font-size: 10px; font-weight: 500; }
.logo svg { width: 60px; height: 20px; }
.menu { display: flex; height: 100%; margin-left: 16px; }
.menu a { display: flex; align-items: center; gap: 5px; padding: 0 7px; }
.menu svg, .login > a svg { width: 16px; height: 16px; fill: #4b617b; }
.menu .on { background: #8b0012; color: #fff; font-weight: 700; }
.menu .on svg { fill: #fff; }
.find { margin-left: auto; padding-right: 18px; border-right: 1px solid #e6ebf0; }
.find svg { width: 13px; height: 13px; fill: none; stroke: #4b617b; stroke-width: 2; }
.login { position: relative; padding: 0 14px 0 16px; }
.login > a { display: flex; align-items: center; gap: 4px; }
.tip {
  position: absolute;
  top: 25px;
  right: -14px;
  width: 132px;
  height: 26px;
  display: flex;
  gap: 5px;
  align-items: center;
  padding: 0 6px 0 5px;
  background: #182b39;
  color: #fff;
  font: 700 9px/11px Lato, sans-serif;
  white-space: nowrap;
  z-index: 2;
}
.tip::before { content: ""; position: absolute; left: 62px; top: -5px; border: 5px solid transparent; border-top: 0; border-bottom-color: #182b39; }
.tip p { flex: 1; }
.tip-heart { width: 12px; height: 11px; color: #f7637e; }
.tip-heart use { width: 12px; height: 11px; }
.tip button { align-self: flex-start; padding-top: 5px; }
.tip button svg { width: 8px; height: 8px; stroke: #fff; stroke-width: 2; }

.game { position: relative; margin-top: 14px; }
.board { width: 100%; height: auto; overflow: hidden; }
.tile text { font: 700 18px "Noto Sans CJK SC", "Noto Sans", sans-serif; text-anchor: middle; fill: #1e2a38; }
.tile .car { font-family: "Noto Sans", sans-serif; }
.c use { fill: url(#g-c); stroke: url(#s-c); }
.y use { fill: url(#g-y); stroke: url(#s-y); }
.w use { fill: url(#g-w); stroke: url(#s-w); }
.d use { fill: url(#g-d); stroke: #1c1c2a; }
.tile.d text, .tile.big text { fill: #fff; }
.gone use { fill: #1670a6; fill-opacity: .75; }
.tile.gone text { fill: #6db9ea; }
.big path { fill: url(#g-d); stroke: #1f1f2d; stroke-width: 7; stroke-linejoin: round; }
.tile.big text { font-size: 79px; }
.badge-y path { fill: url(#g-y); stroke: url(#s-y); stroke-width: 2; }
.badge-c path { fill: url(#g-c); stroke: #3df5f2; stroke-width: 2; }
.badge-y text, .badge-c text { font: 500 17px "Noto Sans", sans-serif; text-anchor: middle; fill: #1e2f30; }

.controls { position: absolute; top: 14px; right: 14px; display: flex; gap: 14px; }
.controls button {
  width: 40px;
  height: 40px;
  display: grid;
  place-items: center;
  border: 2px solid #fff;
  border-top-color: #d9d9dc;
  border-radius: 7px;
  background: linear-gradient(#fff 60%, #c9c6c8);
}
.controls svg { width: 20px; height: 20px; fill: #16232e; }
.controls .ln { fill: none; stroke: #16232e; stroke-width: 1.8; }
.controls .x { stroke: #16232e; stroke-width: 3; }

.question {
  position: absolute;
  inset: 300px 14px 0;
  display: flex;
  flex-direction: column;
  gap: 18px;
  padding-top: 20px;
  border-radius: 4px 4px 0 0;
  background: rgba(255, 255, 255, .9);
  color: #1a2733;
  text-align: center;
  font: 500 12px/17px "Noto Sans", sans-serif;
}

.about { background: #fff; padding: 13px 7px 0 17px; height: 200px; }
.about-head { display: flex; align-items: center; gap: 13px; padding-top: 3px; }
h1 { font: 700 20px/27px "DejaVu Sans", sans-serif; color: #a50028; }
.fav { width: 27px; height: 27px; display: grid; place-items: center; background: #4b617b; color: #fff; }
.fav svg { width: 14px; height: 12px; }
.talk { margin-left: auto; align-self: flex-start; margin-top: -3px; }
.talk svg { width: 22px; height: 20px; fill: #4b617b; }
.about p { margin-top: 23px; font: 10px/14px "DejaVu Sans", sans-serif; color: #555; }

.scroll { width: 10px; background: #2b2a2c; display: flex; flex-direction: column; align-items: center; padding: 4px 0; }
.scroll .up, .scroll .down { border: 3px solid transparent; }
.up { border-top: 0 !important; border-bottom: 5px solid #999 !important; }
.down { border-bottom: 0 !important; border-top: 5px solid #999 !important; margin-top: auto; }
.thumb { width: 6px; height: 49%; margin-top: 3px; border-radius: 3px; background: #9a999b; }

/* taskbar */
.taskbar { display: grid; grid-template-columns: 1fr minmax(0, 650px) 1fr; align-items: center; height: 32px; background: #201e26; border-top: 1px solid #35333b; }
.weather { display: flex; align-items: center; gap: 8px; padding-left: 12px; line-height: 10px; }
.weather svg { width: 16px; height: 16px; }
.dock { display: flex; align-items: center; height: 100%; padding-left: 7px; }
.start { width: 16px; height: 16px; }
.search { width: 141px; height: 22px; margin: 0 3px 0 15px; padding-left: 7px; display: flex; align-items: center; gap: 5px; border-radius: 11px; background: #3a3841; color: #b8b8bc; }
.search svg { width: 9px; height: 9px; fill: none; stroke: #aaa; }
.apps-row { flex: 1; display: flex; height: 100%; }
.apps-row button { flex: 1; display: grid; place-items: center; position: relative; }
.apps-row svg { width: 16px; height: 16px; }
.apps-row .badge { right: 2px; top: 1px; bottom: auto; min-width: 10px; }
.run::after, .front::after, .hot::after { content: ""; position: absolute; bottom: 0; left: 50%; width: 4px; margin-left: -2px; height: 2px; border-radius: 1px; background: #96959b; }
.front { background: #2c2a31; border-radius: 4px; }
.front::after { width: 10px; margin-left: -5px; background: #4ac6ef; }
.hot { background: #6d3445; border: 1px solid #201e26 !important; border-radius: 5px; }
.hot::after { width: 16px; margin-left: -8px; background: #f28a9c; }
.pr { width: 15px; height: 15px; border-radius: 3px; background: #00005b; color: #9a9aff; font: 700 9px/15px "Noto Sans", sans-serif; }
.rec { width: 14px; height: 14px; border-radius: 3px; background: #0b0f12; color: #21c59a; font: 700 5px/14px "Noto Sans", sans-serif; }
.tray { display: flex; align-items: center; justify-content: flex-end; gap: 9px; padding-right: 12px; line-height: 10px; text-align: right; }
.tray svg { width: 12px; height: 12px; fill: none; stroke: #dcdce0; }
.tray .vol { margin-left: -5px; }
.tray .mic { stroke: #6cc0d0; }
.tray time { margin-left: 4px; margin-right: -4px; }

/* stream overlays */
.chat {
  position: absolute;
  left: 59px;
  bottom: 46px;
  height: 141px;
  display: grid;
  grid-template-columns: 95px auto;
  grid-auto-rows: 1fr;
  column-gap: 8px;
  align-items: center;
  font: 700 14px/16px Roboto, sans-serif;
  color: #3b67b5;
}
.chat b { text-align: right; text-shadow: 0 0 1px rgba(60, 60, 120, .5); }
.chat .r { color: #b0123c; }
.chat span { font-weight: 500; color: #fff; text-shadow: 0 0 1px #8a8a8a, 0 0 2px #9a9a9a; }
.dono { position: absolute; left: 4px; bottom: 0; font: 36px/40px "Liberation Sans", Arial, sans-serif; color: #fff; white-space: nowrap; }
.cursor { position: absolute; left: 784px; top: 485px; width: 8px; height: 12px; fill: #fff; fill-opacity: .7; stroke: #555; stroke-width: .8; }
```
